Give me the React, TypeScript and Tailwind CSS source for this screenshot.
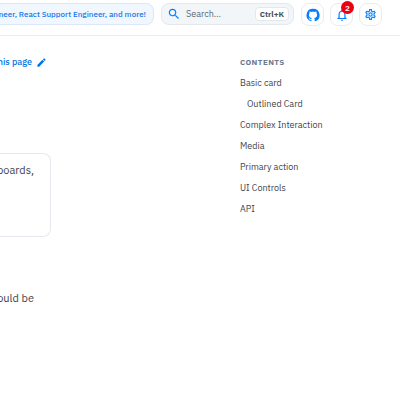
import type { ReactNode } from "react";

const sections = [
  { id: "basic-card", label: "Basic card", nested: false },
  { id: "outlined-card", label: "Outlined Card", nested: true },
  { id: "complex-interaction", label: "Complex Interaction", nested: false },
  { id: "media", label: "Media", nested: false },
  { id: "primary-action", label: "Primary action", nested: false },
  { id: "ui-controls", label: "UI Controls", nested: false },
  { id: "api", label: "API", nested: false },
];

function IconButton({ label, children }: { label: string; children: ReactNode }) {
  return (
    <button
      type="button"
      aria-label={label}
      className="relative flex size-[23px] shrink-0 items-center justify-center rounded-lg border border-[#e8ebf0] bg-white text-[#007fff]"
    >
      {children}
    </button>
  );
}

function Header() {
  return (
    <header className="flex h-9 items-start border-b border-[#e9ecf0] pt-[3px] pr-[18px]">
      <a
        href="#careers"
        className="flex h-[22px] min-w-0 flex-1 items-center justify-end overflow-hidden rounded-r-lg border border-l-0 border-[#dce8f5] bg-[#f0f7ff] pr-[7px] text-[8px] font-medium whitespace-nowrap text-[#1976e8]"
      >
        <span>neer, React Support Engineer, and more!</span>
      </a>
      <label className="ml-[7px] flex h-[22px] w-[133px] shrink-0 items-center rounded-lg border border-[#e3e8ef] bg-[#f3f6f9] pr-1 pl-[5px]">
        <svg viewBox="0 0 24 24" className="size-[14px] shrink-0 fill-[#007fff]" aria-hidden="true">
          <path d="M15.5 14h-.79l-.28-.27C15.41 12.59 16 11.11 16 9.5 16 5.91 13.09 3 9.5 3S3 5.91 3 9.5 5.91 16 9.5 16c1.61 0 3.09-.59 4.23-1.57l.27.28v.79l5 4.99L20.49 19l-4.99-5zm-6 0C7.01 14 5 11.99 5 9.5S7.01 5 9.5 5 14 7.01 14 9.5 11.99 14 9.5 14z" />
        </svg>
        <input
          type="text"
          aria-label="Search"
          placeholder="Search…"
          className="ml-[5px] min-w-0 flex-1 bg-transparent text-[9px] text-[#5a6878] outline-none placeholder:text-[#5a6878]"
        />
        <kbd className="flex h-[14px] items-center rounded border border-[#e3e8ef] bg-white px-1 font-['IBM_Plex_Sans',Roboto,sans-serif] text-[8px] font-bold text-[#3e5060]">
          Ctrl+K
        </kbd>
      </label>
      <div className="ml-[7px] flex gap-1.5">
        <IconButton label="GitHub repository">
          <svg viewBox="0 0 24 24" className="size-[14px] fill-current" aria-hidden="true">
            <path d="M12 1.27a11 11 0 00-3.48 21.46c.55.09.73-.28.73-.55v-1.84c-3.03.64-3.67-1.46-3.67-1.46-.55-1.29-1.28-1.65-1.28-1.65-.92-.65.1-.65.1-.65 1.1 0 1.73 1.1 1.73 1.1.92 1.65 2.57 1.2 3.21.92a2 2 0 01.64-1.47c-2.47-.27-5.04-1.19-5.04-5.5 0-1.1.46-2.1 1.2-2.84a3.76 3.76 0 010-2.93s.91-.28 3.11 1.1c1.8-.49 3.7-.49 5.5 0 2.1-1.38 3.02-1.1 3.02-1.1a3.76 3.76 0 01.1 2.93c.83.74 1.2 1.74 1.2 2.94 0 4.21-2.57 5.13-5.04 5.4.45.37.82.92.82 2.02v3.03c0 .27.1.64.73.55A11 11 0 0012 1.27" />
          </svg>
        </IconButton>
        <IconButton label="Notifications, 2 unread">
          <svg viewBox="0 0 24 24" className="size-[14px] fill-current" aria-hidden="true">
            <path d="M12 22c1.1 0 2-.9 2-2h-4c0 1.1.9 2 2 2zm6-6v-5c0-3.07-1.63-5.64-4.5-6.32V4c0-.83-.67-1.5-1.5-1.5s-1.5.67-1.5 1.5v.68C7.64 5.36 6 7.92 6 11v5l-2 2v1h16v-1l-2-2zm-2 1H8v-6c0-2.48 1.51-4.5 4-4.5s4 2.02 4 4.5v6z" />
          </svg>
          <span className="absolute -top-[3px] -right-0.5 flex size-[13px] items-center justify-center rounded-full bg-[#eb0014] text-[8px] leading-none font-semibold text-white">
            2
          </span>
        </IconButton>
        <IconButton label="Settings">
          <svg viewBox="0 0 24 24" className="size-[13px] fill-current" aria-hidden="true">
            <path d="M19.43 12.98c.04-.32.07-.64.07-.98 0-.34-.03-.66-.07-.98l2.11-1.65c.19-.15.24-.42.12-.64l-2-3.46c-.09-.16-.26-.25-.44-.25-.06 0-.12.01-.17.03l-2.49 1c-.52-.4-1.08-.73-1.69-.98l-.38-2.65C14.46 2.18 14.25 2 14 2h-4c-.25 0-.46.18-.49.42l-.38 2.65c-.61.25-1.17.59-1.69.98l-2.49-1c-.06-.02-.12-.03-.18-.03-.17 0-.34.09-.43.25l-2 3.46c-.13.22-.07.49.12.64l2.11 1.65c-.04.32-.07.65-.07.98 0 .33.03.66.07.98l-2.11 1.65c-.19.15-.24.42-.12.64l2 3.46c.09.16.26.25.44.25.06 0 .12-.01.17-.03l2.49-1c.52.4 1.08.73 1.69.98l.38 2.65c.03.24.24.42.49.42h4c.25 0 .46-.18.49-.42l.38-2.65c.61-.25 1.17-.59 1.69-.98l2.49 1c.06.02.12.03.18.03.17 0 .34-.09.43-.25l2-3.46c.12-.22.07-.49-.12-.64l-2.11-1.65zm-1.98-1.71c.04.31.05.52.05.73 0 .21-.02.43-.05.73l-.14 1.13.89.7 1.08.84-.7 1.21-1.27-.51-1.04-.42-.9.68c-.43.32-.84.56-1.25.73l-1.06.43-.16 1.13-.2 1.35h-1.4l-.19-1.35-.16-1.13-1.06-.43c-.43-.18-.83-.41-1.23-.71l-.91-.7-1.06.43-1.27.51-.7-1.21 1.08-.84.89-.7-.14-1.13c-.03-.31-.05-.54-.05-.74s.02-.43.05-.73l.14-1.13-.89-.7-1.08-.84.7-1.21 1.27.51 1.04.42.9-.68c.43-.32.84-.56 1.25-.73l1.06-.43.16-1.13.2-1.35h1.39l.19 1.35.16 1.13 1.06.43c.43.18.83.41 1.23.71l.91.7 1.06-.43 1.27-.51.7 1.21-1.07.85-.89.7.14 1.13zM12 8c-2.21 0-4 1.79-4 4s1.79 4 4 4 4-1.79 4-4-1.79-4-4-4zm0 6c-1.1 0-2-.9-2-2s.9-2 2-2 2 .9 2 2-.9 2-2 2z" />
          </svg>
        </IconButton>
      </div>
    </header>
  );
}

export default function App() {
  return (
    <div className="min-h-screen overflow-hidden bg-white font-['IBM_Plex_Sans',Roboto,sans-serif] text-[#3e444d]">
      <Header />
      <div className="flex justify-between">
        <main className="w-[51px] min-w-0 pt-4">
          <a
            href="#edit"
            className="flex h-5 items-center justify-end gap-1 pr-1 text-[9px] font-medium whitespace-nowrap text-[#0072e5]"
          >
            <span>his page</span>
            <svg viewBox="0 0 24 24" className="size-[11px] shrink-0 fill-current" aria-hidden="true">
              <path d="M3 17.25V21h3.75L17.81 9.94l-3.75-3.75L3 17.25zM20.71 7.04c.39-.39.39-1.02 0-1.41l-2.34-2.34c-.39-.39-1.02-.39-1.41 0l-1.83 1.83 3.75 3.75 1.83-1.83z" />
            </svg>
          </a>
          <section className="mt-[81px] flex h-[84px] justify-end rounded-r-lg border border-l-0 border-[#e5e8ec] pt-2 pr-4">
            <p className="text-[11px] leading-4 whitespace-nowrap">boards,</p>
          </section>
          <p className="mt-[53px] flex justify-end pr-[17px] text-[11px] leading-4 whitespace-nowrap">
            <span>ould be</span>
          </p>
        </main>
        <nav aria-label="Contents" className="w-40 shrink-0 pt-4">
          <h2 className="text-[8px] leading-5 font-bold tracking-wider text-[#6b7a90] uppercase">
            Contents
          </h2>
          <ul className="text-[9px] leading-[21px]">
            {sections.map((section) => (
              <li key={section.id} className={section.nested ? "pl-[7px]" : ""}>
                <a href={`#${section.id}`} className="block">
                  {section.label}
                </a>
              </li>
            ))}
          </ul>
        </nav>
      </div>
    </div>
  );
}
